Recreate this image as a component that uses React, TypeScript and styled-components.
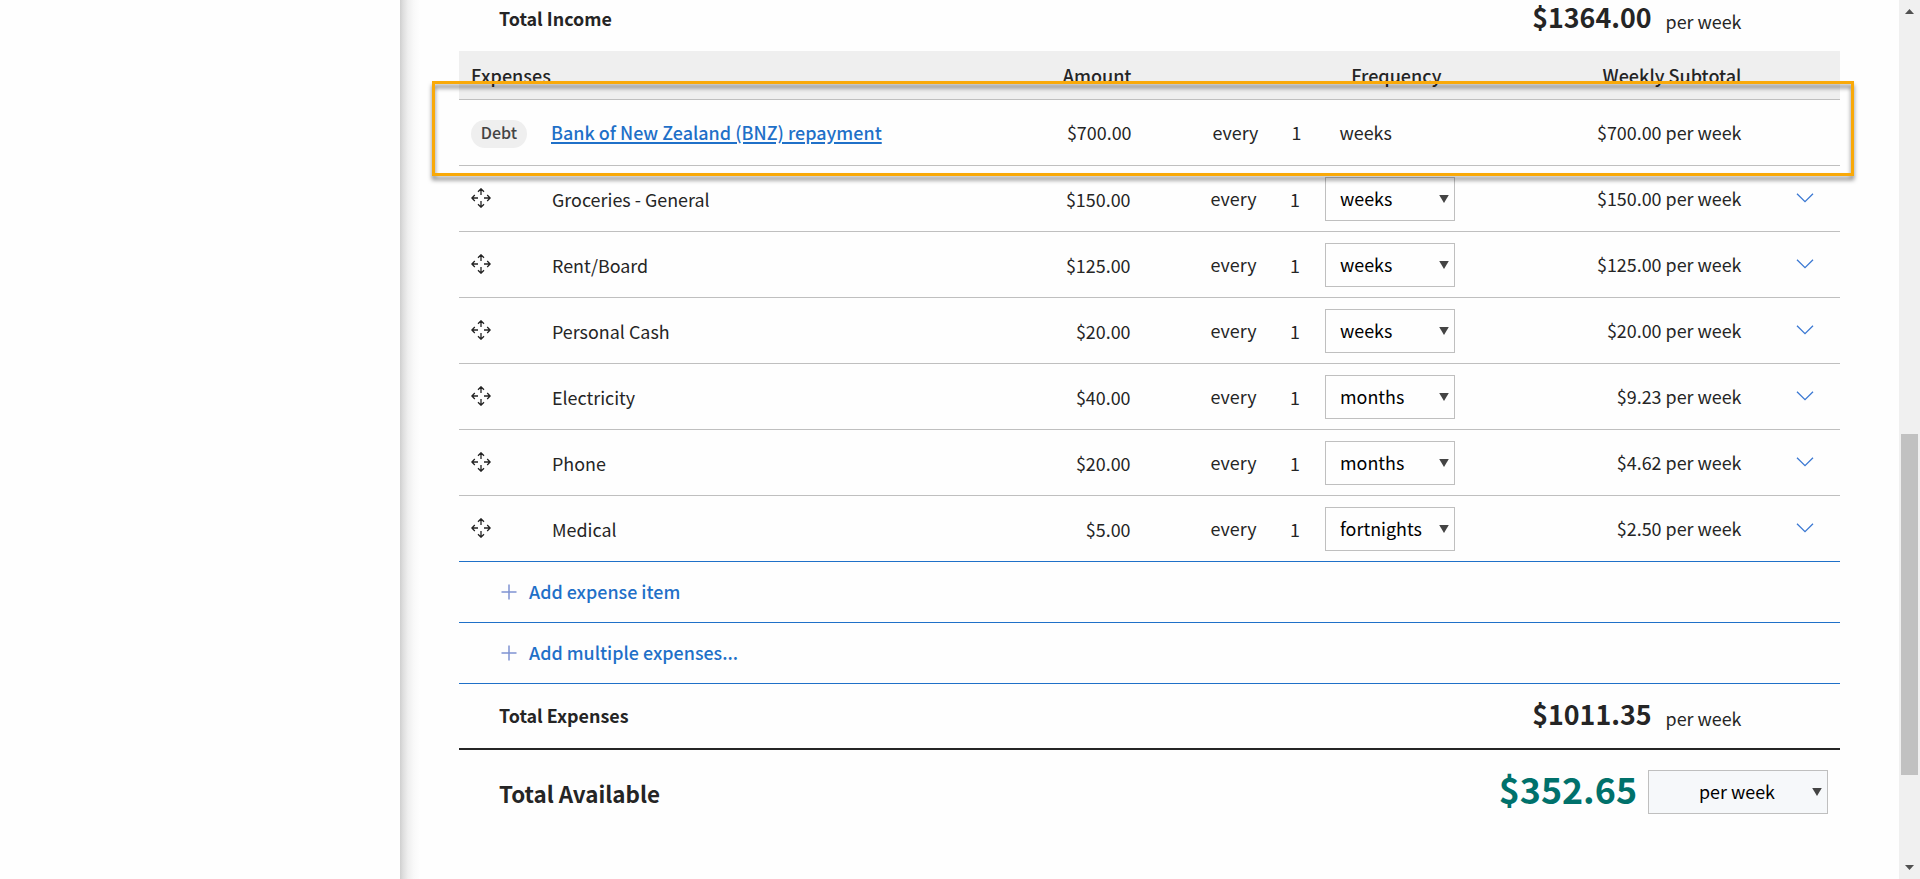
import React from "react";
import styled, { createGlobalStyle } from "styled-components";

const ink = "#252525";
const blue = "#1f70c8";
const rule = "#bfbfbf";

const GlobalStyle = createGlobalStyle`
  * { box-sizing: border-box; }
  body {
    margin: 0;
    background: #fefefe;
    color: ${ink};
    font-family: "Noto Sans CJK JP", "Noto Sans", sans-serif;
    font-size: 17.9px;
    line-height: 26px;
    white-space: nowrap;
  }
`;

const Page = styled.div`
  display: flex;
  height: 879px;
  overflow: hidden;
`;

const Sidebar = styled.aside`
  width: 400px;
  flex: none;
`;

const Content = styled.main`
  position: relative;
  flex: 1;
  padding: 0 59px;
  overflow: hidden;
  background: linear-gradient(to right, #cfcfcf 0, #dedede 3px, #efefef 8px, #f9f9f9 14px, #fefefe 20px);
`;

const Sheet = styled.div`
  margin-top: -13px;
`;

const TotalRow = styled.div<{ $ruled?: boolean }>`
  display: flex;
  align-items: center;
  justify-content: space-between;
  height: ${(p) => (p.$ruled ? 66 : 64)}px;
  padding: 0 98.5px 0 40px;
  border-bottom: ${(p) => (p.$ruled ? `2px solid ${ink}` : "none")};
`;

const TotalLabel = styled.div`
  font-weight: 700;
  padding-bottom: 2px;
`;

const TotalValue = styled.div`
  display: flex;
  align-items: center;
  gap: 14px;
`;

const TotalAmount = styled.span`
  font-size: 26.8px;
  font-weight: 700;
  padding-bottom: 5px;
`;

const TotalPeriod = styled.span`
  padding-top: 4px;
`;

const AvailableRow = styled.div`
  display: flex;
  align-items: center;
  justify-content: space-between;
  height: 84px;
  padding: 0 12px 0 40px;
`;

const AvailableLabel = styled.div`
  padding-top: 2px;
  font-size: 22.4px;
  font-weight: 700;
`;

const AvailableValue = styled.div`
  display: flex;
  align-items: center;
  gap: 11px;
`;

const AvailableAmount = styled.span`
  color: #00716b;
  font-size: 35.8px;
  font-weight: 700;
  padding-bottom: 8px;
`;

const HeaderRow = styled.div`
  display: grid;
  grid-template-columns: 92px 580.5px 323.5px 286.5px 1fr;
  align-items: center;
  height: 49px;
  background: #efefef;
  border-bottom: 1px solid ${rule};
  font-size: 18px;
  font-weight: 500;
`;

const ItemRow = styled.div<{ $last?: boolean }>`
  display: grid;
  grid-template-columns: 92px 580px 79.6px 79.4px 35px 130px 286.5px 1fr;
  align-items: center;
  height: 66px;
  padding-bottom: 1px;
  border-bottom: 1px solid ${(p) => (p.$last ? blue : rule)};
`;

const DebtRow = styled(ItemRow)`
  grid-template-columns: 92px 580.5px 81px 79px 48px 116.5px 285.5px 1fr;
`;

const Lead = styled.div`
  display: flex;
  align-items: center;
  padding-left: 12px;
`;

const NameCell = styled.div<{ $inset?: boolean }>`
  display: flex;
  justify-content: space-between;
  padding: ${(p) => (p.$inset ? "2px 0.5px 0 1px" : "0")};
`;

const RightCell = styled.div`
  text-align: right;
`;

const EveryCell = styled.div`
  grid-column: 4;
`;

const CountCell = styled.div<{ $low?: boolean }>`
  padding-top: ${(p) => (p.$low ? 2 : 0)}px;
`;

const FrequencyHeading = styled.div`
  padding-right: 13.5px;
  text-align: right;
`;

const Chevron = styled.div`
  display: flex;
  padding-left: 55px;
`;

const Pill = styled.span`
  width: 56px;
  height: 28px;
  margin-top: 4px;
  border-radius: 14px;
  background: #efefef;
  color: #444;
  font-size: 16px;
  font-weight: 500;
  line-height: 24px;
  text-align: center;
`;

const DebtLink = styled.a`
  color: ${blue};
  font-size: 17.95px;
  font-weight: 500;
  text-decoration: underline;
  text-decoration-thickness: 2px;
  text-underline-offset: 1.5px;
`;

const SelectBox = styled.div`
  display: flex;
  align-items: center;
  justify-content: space-between;
  width: 130px;
  height: 44px;
  margin-top: 2px;
  padding: 0 5px 2px 14px;
  border: 1px solid ${rule};
  color: #000;

  svg {
    margin-top: 2px;
  }
`;

const PeriodSelect = styled(SelectBox)`
  width: 180px;
  margin-top: 0;
  padding-left: 50px;
  background: #f6f8fa;
`;

const AddRow = styled.div`
  display: flex;
  align-items: center;
  gap: 12px;
  height: 61px;
  padding-left: 42px;
  border-bottom: 1px solid ${blue};
  color: ${blue};
  font-weight: 500;
`;

const AddLabel = styled.span`
  padding-bottom: 2px;
`;

const Highlight = styled.div`
  position: absolute;
  left: 32px;
  top: 81px;
  width: 1422px;
  height: 95px;
  border: 3px solid #f9a908;
  filter: drop-shadow(0 4px 2px rgba(0, 0, 0, 0.5));
  pointer-events: none;
`;

const ScrollTrack = styled.div`
  display: flex;
  flex-direction: column;
  align-items: center;
  width: 21px;
  flex: none;
  padding: 9px 0;
  background: #f0f0f0;
`;

const ScrollThumb = styled.div`
  width: 17px;
  height: 341px;
  flex: none;
  margin: 420px 0 auto;
  background: #c1c1c1;
`;

const MoveIcon = () => (
  <svg width="20" height="20" viewBox="0 0 20 20" fill="none" stroke="#222" strokeWidth="1.3">
    <path d="M10 .8V7M7 3.8l3-3 3 3M10 19.2V13M7 16.2l3 3 3-3M.8 10H7M3.8 7l-3 3 3 3M19.2 10H13M16.2 7l3 3-3 3" />
  </svg>
);

const ChevronIcon = () => (
  <svg width="18" height="10" viewBox="0 0 18 10" fill="none" stroke="#3a78d2" strokeWidth="1.3">
    <path d="M1 .8l8 7.8 8-7.8" />
  </svg>
);

const PlusIcon = () => (
  <svg width="16" height="16" viewBox="0 0 16 16" stroke="#7f93d2" strokeWidth="1.5">
    <path d="M8 .5v15M.5 8h15" />
  </svg>
);

const Caret = () => (
  <svg width="10" height="8" viewBox="0 0 10 8">
    <path d="M.2 0h9.600L5 8z" fill="#444" />
  </svg>
);

const ScrollArrow = ({ up }: { up?: boolean }) => (
  <svg width="9" height="5" viewBox="0 0 9 5">
    <path d={up ? "M0 5h9L4.500 0z" : "M0 0h9L4.500 5z"} fill="#505050" />
  </svg>
);

const items = [
  { name: "Groceries - General", amount: "$150.00", unit: "weeks", weekly: "$150.00" },
  { name: "Rent/Board", amount: "$125.00", unit: "weeks", weekly: "$125.00" },
  { name: "Personal Cash", amount: "$20.00", unit: "weeks", weekly: "$20.00" },
  { name: "Electricity", amount: "$40.00", unit: "months", weekly: "$9.23" },
  { name: "Phone", amount: "$20.00", unit: "months", weekly: "$4.62" },
  { name: "Medical", amount: "$5.00", unit: "fortnights", weekly: "$2.50" },
];

export default function App() {
  return (
    <Page>
      <GlobalStyle />
      <Sidebar />
      <Content>
        <Sheet>
          <TotalRow>
            <TotalLabel>Total Income</TotalLabel>
            <TotalValue>
              <TotalAmount>$1364.00</TotalAmount>
              <TotalPeriod>per week</TotalPeriod>
            </TotalValue>
          </TotalRow>
          <HeaderRow>
            <Lead>Expenses</Lead>
            <RightCell>Amount</RightCell>
            <FrequencyHeading>Frequency</FrequencyHeading>
            <RightCell>Weekly Subtotal</RightCell>
          </HeaderRow>
          <DebtRow>
            <Lead>
              <Pill>Debt</Pill>
            </Lead>
            <NameCell>
              <DebtLink>Bank of New Zealand (BNZ) repayment</DebtLink>
              <span>$700.00</span>
            </NameCell>
            <EveryCell>every</EveryCell>
            <CountCell>1</CountCell>
            <div>weeks</div>
            <RightCell>$700.00 per week</RightCell>
          </DebtRow>
          {items.map((item, i) => (
            <ItemRow key={item.name} $last={i === items.length - 1}>
              <Lead>
                <MoveIcon />
              </Lead>
              <NameCell $inset>
                <span>{item.name}</span>
                <span>{item.amount}</span>
              </NameCell>
              <EveryCell>every</EveryCell>
              <CountCell $low>1</CountCell>
              <SelectBox>
                {item.unit}
                <Caret />
              </SelectBox>
              <RightCell>{item.weekly} per week</RightCell>
              <Chevron>
                <ChevronIcon />
              </Chevron>
            </ItemRow>
          ))}
          <AddRow>
            <PlusIcon />
            <AddLabel>Add expense item</AddLabel>
          </AddRow>
          <AddRow>
            <PlusIcon />
            <AddLabel>Add multiple expenses...</AddLabel>
          </AddRow>
          <TotalRow $ruled>
            <TotalLabel>Total Expenses</TotalLabel>
            <TotalValue>
              <TotalAmount>$1011.35</TotalAmount>
              <TotalPeriod>per week</TotalPeriod>
            </TotalValue>
          </TotalRow>
          <AvailableRow>
            <AvailableLabel>Total Available</AvailableLabel>
            <AvailableValue>
              <AvailableAmount>$352.65</AvailableAmount>
              <PeriodSelect>
                per week
                <Caret />
              </PeriodSelect>
            </AvailableValue>
          </AvailableRow>
        </Sheet>
        <Highlight />
      </Content>
      <ScrollTrack>
        <ScrollArrow up />
        <ScrollThumb />
        <ScrollArrow />
      </ScrollTrack>
    </Page>
  );
}
